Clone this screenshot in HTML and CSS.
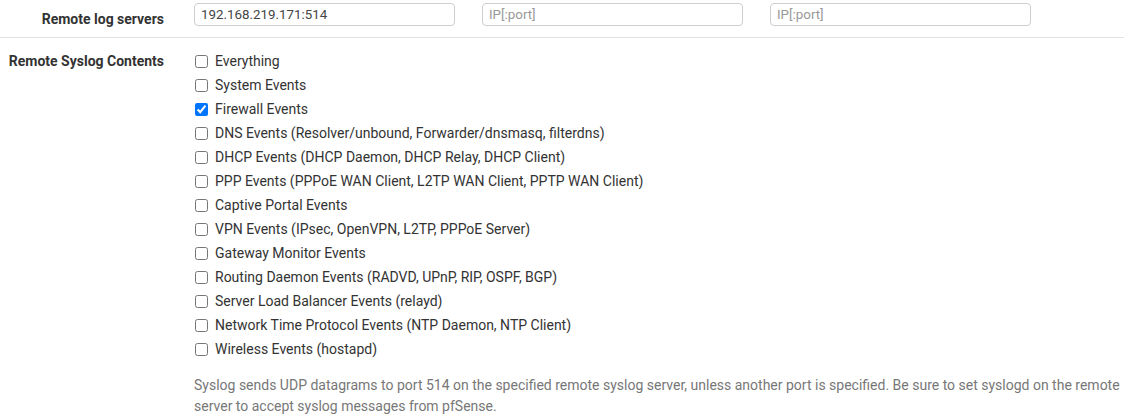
FILE: index.html
```html
<!DOCTYPE html>
<html>
<head>
<meta charset="utf-8">
<link rel="stylesheet" href="styles.css">
</head>
<body>
<div class="form">
  <div class="row row-servers">
    <div class="label">Remote log servers</div>
    <div class="inputs">
      <input class="text" type="text" value="192.168.219.171:514">
      <input class="text" type="text" placeholder="IP[:port]">
      <input class="text" type="text" placeholder="IP[:port]">
    </div>
  </div>
  <div class="row row-contents">
    <div class="label">Remote Syslog Contents</div>
    <div class="content">
      <ul class="checks">
        <li><label><input type="checkbox"> Everything</label></li>
        <li><label><input type="checkbox"> System Events</label></li>
        <li><label><input type="checkbox" checked> Firewall Events</label></li>
        <li><label><input type="checkbox"> DNS Events (Resolver/unbound, Forwarder/dnsmasq, filterdns)</label></li>
        <li><label><input type="checkbox"> DHCP Events (DHCP Daemon, DHCP Relay, DHCP Client)</label></li>
        <li><label><input type="checkbox"> PPP Events (PPPoE WAN Client, L2TP WAN Client, PPTP WAN Client)</label></li>
        <li><label><input type="checkbox"> Captive Portal Events</label></li>
        <li><label><input type="checkbox"> VPN Events (IPsec, OpenVPN, L2TP, PPPoE Server)</label></li>
        <li><label><input type="checkbox"> Gateway Monitor Events</label></li>
        <li><label><input type="checkbox"> Routing Daemon Events (RADVD, UPnP, RIP, OSPF, BGP)</label></li>
        <li><label><input type="checkbox"> Server Load Balancer Events (relayd)</label></li>
        <li><label><input type="checkbox"> Network Time Protocol Events (NTP Daemon, NTP Client)</label></li>
        <li><label><input type="checkbox"> Wireless Events (hostapd)</label></li>
      </ul>
      <p class="help">Syslog sends UDP datagrams to port 514 on the specified remote syslog server, unless another port is specified. Be sure to set syslogd on the remote server to accept syslog messages from pfSense.</p>
    </div>
  </div>
</div>
</body>
</html>
```
FILE: styles.css
```css
* { box-sizing: border-box; }
html, body { margin: 0; padding: 0; background: #fff; }
body {
  font-family: Roboto, "Liberation Sans", sans-serif;
  font-size: 14px;
  color: #333;
  width: 1124px;
  height: 416px;
  overflow: hidden;
}
.row {
  display: grid;
  grid-template-columns: 164px 1fr;
  column-gap: 30px;
}
.row-servers {
  padding-top: 3px;
  height: 38px;
  border-bottom: 1px solid #e2e2e2;
}
.label {
  font-weight: 700;
  text-align: right;
  color: #333;
  font-size: 14px;
}
.row-servers .label { line-height: 23px; padding-top: 5px; }
.inputs {
  display: grid;
  grid-template-columns: repeat(3, 261px);
  column-gap: 27px;
}
.text {
  height: 23px;
  border: 1px solid #cfcfcf;
  border-radius: 4px;
  padding: 0 6px;
  font-family: Roboto, "Liberation Sans", sans-serif;
  font-size: 13.33px;
  color: #444;
  background: #fff;
  outline: none;
}
.text::placeholder { color: #999; }
.row-contents { padding-top: 11px; }
.row-contents .label { line-height: 24px; }
.checks { list-style: none; margin: 0; padding: 0; }
.checks li { height: 24px; line-height: 24px; }
.checks label { display: flex; align-items: center; gap: 7px; color: #333; }
.checks input { margin: 0 0 0 1px; width: 13px; height: 13px; }
.help {
  margin: 14px 0 0;
  color: #777;
  line-height: 21px;
  font-size: 14px;
}
```
